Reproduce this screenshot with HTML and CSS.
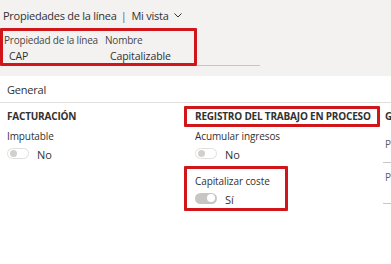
FILE: index.html
```html
<!DOCTYPE html>
<html lang="es">
<head>
<meta charset="utf-8">
<link rel="stylesheet" href="styles.css">
</head>
<body>
<div class="top">
  <div class="title">
    <span>Propiedades de la línea</span>
    <span class="sep">|</span>
    <span>Mi vista</span>
    <svg class="chev" width="8" height="5" viewBox="0 0 8 5"><path d="M0.5 0.5 L4 4 L7.5 0.5" fill="none" stroke="#323130" stroke-width="1"/></svg>
  </div>
  <div class="fieldrow">
    <div class="hl hl-head">
      <div class="hf hf1">
        <div class="hlabel">Propiedad de la línea</div>
        <div class="hval">CAP</div>
      </div>
      <div class="hf hf2">
        <div class="hlabel">Nombre</div>
        <div class="hval">Capitalizable</div>
      </div>
    </div>
    <div class="tail"></div>
  </div>
</div>
<div class="tabbar"><span class="tab">General</span></div>
<div class="cols">
  <div class="col c1">
    <div class="heading">FACTURACIÓN</div>
    <div class="field">
      <div class="label">Imputable</div>
      <div class="trow"><span class="toggle off"><span class="knob"></span></span><span class="tval">No</span></div>
    </div>
  </div>
  <div class="col c2">
    <div class="heading hl">REGISTRO DEL TRABAJO EN PROCESO</div>
    <div class="field">
      <div class="label">Acumular ingresos</div>
      <div class="trow"><span class="toggle off"><span class="knob"></span></span><span class="tval">No</span></div>
    </div>
    <div class="field hl hl-field">
      <div class="label">Capitalizar coste</div>
      <div class="trow"><span class="toggle on"><span class="knob"></span></span><span class="tval">Sí</span></div>
    </div>
  </div>
  <div class="col c3">
    <div class="heading">GENERAL</div>
    <div class="tfield t1"><div class="label">Proyecto</div></div>
    <div class="tfield t2"><div class="label">Padre</div></div>
  </div>
</div>
</body>
</html>
```
FILE: styles.css
```css
html, body {
  margin: 0;
  padding: 0;
}
body {
  width: 391px;
  height: 264px;
  overflow: hidden;
  background: #ffffff;
  font-family: "Open Sans", "Noto Sans", sans-serif;
  color: #323130;
  font-size: 11px;
}
.top {
  background: #f3f2f1;
  height: 76px;
  padding-top: 6px;
  box-sizing: border-box;
}
.title {
  display: flex;
  align-items: center;
  height: 18px;
  padding-left: 3px;
  font-size: 11px;
  white-space: nowrap;
  letter-spacing: -0.25px;
}
.sep {
  margin: 0 5px 0 4px;
  color: #605e5c;
}
.chev {
  margin-left: 5px;
}
.fieldrow {
  display: flex;
  align-items: flex-end;
  margin-top: 4px;
}
.hl {
  border: 3px solid #d1161b;
  border-radius: 1px;
}
.hl-head {
  width: 197px;
  height: 38px;
  box-sizing: border-box;
  display: flex;
  padding-top: 3px;
}
.hf1 {
  width: 101px;
  padding-left: 1px;
}
.hlabel {
  font-size: 10px;
  line-height: 13px;
  color: #484644;
  letter-spacing: -0.2px;
  white-space: nowrap;
}
.hval {
  padding-left: 5px;
  margin-top: 2px;
  line-height: 15px;
  font-size: 10.5px;
  letter-spacing: -0.1px;
}
.tail {
  width: 63px;
  border-bottom: 1px solid #c8c6c4;
}
.tabbar {
  height: 26px;
  border-bottom: 1px solid #e1dfdd;
  display: flex;
  align-items: center;
  padding-left: 7px;
}
.tab {
  font-size: 11px;
  letter-spacing: -0.2px;
}
.cols {
  display: flex;
  padding-top: 3px;
}
.col {
  box-sizing: border-box;
}
.c1 {
  width: 195px;
  padding-left: 7px;
}
.c2 {
  width: 188px;
}
.c3 {
  flex: 1;
  white-space: nowrap;
  overflow: hidden;
  padding-left: 2px;
}
.heading {
  font-weight: 700;
  font-size: 10px;
  line-height: 15px;
  border: 3px solid transparent;
  letter-spacing: -0.2px;
  white-space: nowrap;
  margin-left: -3px;
}
.heading.hl {
  border-color: #d1161b;
  margin-left: -11px;
  padding-left: 8px;
  width: 196px;
  box-sizing: border-box;
}
.field {
  display: flex;
  flex-direction: column;
}
.label {
  font-size: 10px;
  line-height: 16px;
  margin-top: 1px;
  letter-spacing: -0.1px;
  white-space: nowrap;
}
.trow {
  display: flex;
  align-items: center;
  height: 14px;
  margin-top: 2px;
}
.toggle {
  width: 22px;
  height: 11px;
  border-radius: 6px;
  box-sizing: border-box;
  display: flex;
  align-items: center;
}
.toggle.off {
  border: 1px solid #e1dfdd;
  background: #fff;
  padding-left: 2px;
}
.toggle.off .knob {
  width: 7px;
  height: 7px;
  border-radius: 50%;
  background: #d2d0ce;
}
.toggle.on {
  background: #c8c6c4;
  justify-content: flex-end;
  padding-right: 2px;
}
.toggle.on .knob {
  width: 8px;
  height: 8px;
  border-radius: 50%;
  background: #ffffff;
}
.tval {
  margin-left: 8px;
  font-size: 11px;
  padding-top: 3px;
}
.hl-field {
  margin-top: 6px;
  margin-left: -11px;
  padding: 3px 0 3px 8px;
  width: 104px;
  box-sizing: border-box;
  height: 45px;
}
.tfield {
  border-bottom: 1px solid #c8c6c4;
  box-sizing: border-box;
  margin-left: -3px;
  padding-left: 3px;
}
.t1 {
  height: 36px;
  padding-top: 8px;
}
.t2 {
  height: 41px;
  padding-top: 5px;
}
.c3 .label {
  color: #605e5c;
}
```
